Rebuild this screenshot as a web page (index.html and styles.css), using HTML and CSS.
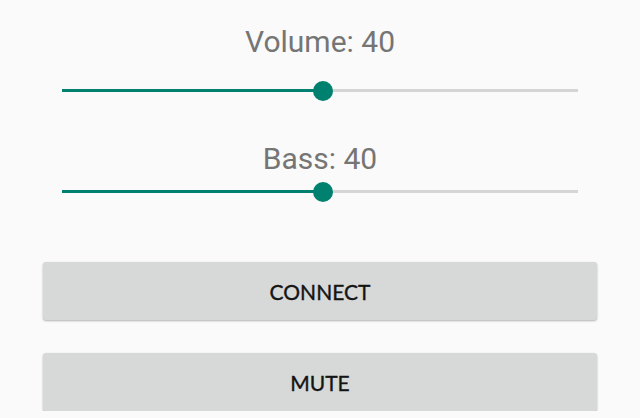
FILE: index.html
```html
<!DOCTYPE html>
<html>
<head>
<meta charset="utf-8">
<link rel="stylesheet" href="styles.css">
</head>
<body>
<div class="panel">
  <div class="label">Volume: 40</div>
  <div class="slider first">
    <div class="track"></div>
    <div class="fill" style="width: 50.6%"></div>
    <div class="thumb" style="left: 50.6%"></div>
  </div>
  <div class="label bass">Bass: 40</div>
  <div class="slider second">
    <div class="track"></div>
    <div class="fill" style="width: 50.6%"></div>
    <div class="thumb" style="left: 50.6%"></div>
  </div>
  <button class="btn connect">CONNECT</button>
  <button class="btn mute">MUTE</button>
</div>
</body>
</html>
```
FILE: styles.css
```css
html, body {
  margin: 0;
  padding: 0;
  background: #fafafa;
}
.panel {
  padding: 24px 43px 0 43px;
  display: flex;
  flex-direction: column;
  font-family: Roboto, "Liberation Sans", sans-serif;
}
.label {
  height: 35px;
  line-height: 35px;
  font-size: 30px;
  color: #757575;
  text-align: center;
}
.label.bass {
  margin-top: 40px;
}
.slider {
  position: relative;
  height: 20px;
  margin: 0 19px;
}
.slider.first {
  margin-top: 22px;
}
.slider.second {
  margin-top: 6px;
}
.track {
  position: absolute;
  left: 0;
  right: 0;
  top: 8px;
  height: 3px;
  background: #d5d5d5;
}
.fill {
  position: absolute;
  left: 0;
  top: 8px;
  height: 3px;
  background: #00806f;
}
.thumb {
  position: absolute;
  top: 0;
  width: 20px;
  height: 20px;
  margin-left: -10px;
  border-radius: 50%;
  background: #00806f;
}
.btn {
  height: 58px;
  border: none;
  border-radius: 3px;
  background: #d7d8d8;
  box-shadow: 0 1px 2px rgba(0, 0, 0, 0.22), 0 1px 3px rgba(0, 0, 0, 0.08);
  font-family: Lato, Roboto, "Liberation Sans", sans-serif;
  font-size: 21px;
  font-weight: 400;
  -webkit-text-stroke: 0.35px #141414;
  color: #141414;
  padding: 0;
}
.btn.connect {
  margin-top: 60px;
}
.btn.mute {
  margin-top: 33px;
}
```
